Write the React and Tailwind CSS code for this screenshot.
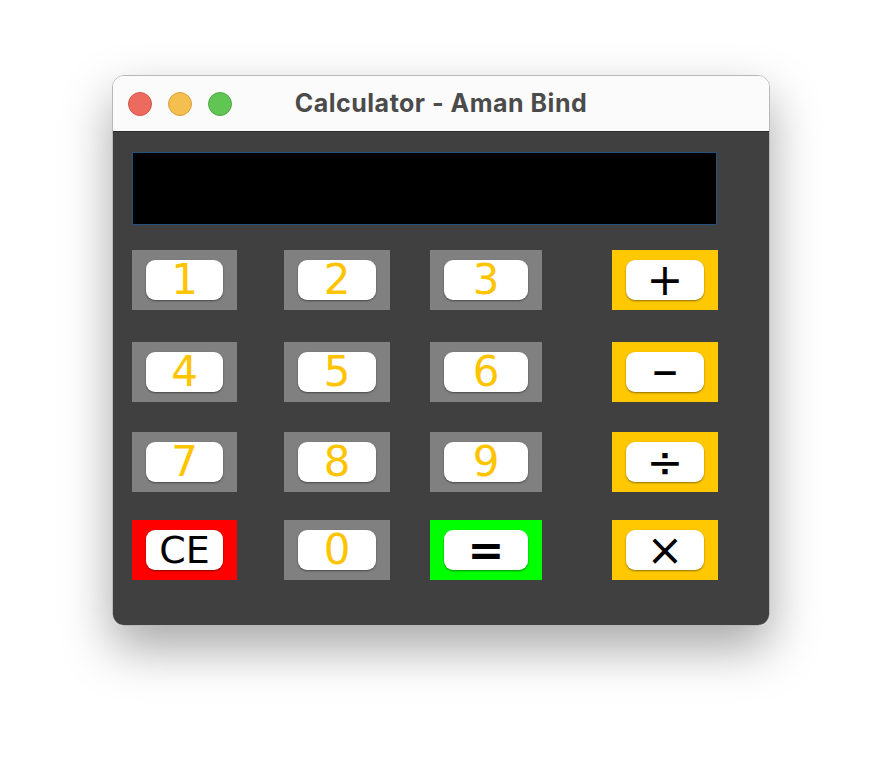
import React from "react";

const rows = [
  [
    { label: "1", kind: "num" },
    { label: "2", kind: "num" },
    { label: "3", kind: "num" },
    { label: "+", kind: "op" },
  ],
  [
    { label: "4", kind: "num" },
    { label: "5", kind: "num" },
    { label: "6", kind: "num" },
    { label: "−", kind: "minus" },
  ],
  [
    { label: "7", kind: "num" },
    { label: "8", kind: "num" },
    { label: "9", kind: "num" },
    { label: "÷", kind: "op" },
  ],
  [
    { label: "CE", kind: "clear" },
    { label: "0", kind: "num" },
    { label: "=", kind: "equals" },
    { label: "×", kind: "op" },
  ],
];

const colClass = [
  "w-[105px]",
  "w-[106px] ml-[47px]",
  "w-[112px] ml-[40px]",
  "w-[106px] ml-[70px]",
];

const rowGap = ["", "mt-[32px]", "mt-[30px]", "mt-[28px]"];

const outerBg = {
  num: "bg-[#808080]",
  op: "bg-[#ffc800]",
  minus: "bg-[#ffc800]",
  clear: "bg-[#ff0000]",
  equals: "bg-[#00ff00]",
};

const labelClass = {
  num: "text-[#ffc400] text-[42px]",
  op: "text-black text-[44px]",
  minus: "text-black text-[34px] font-bold",
  clear: "text-black text-[38px]",
  equals: "text-black text-[44px] font-bold",
};

const CalcButton = ({ item, col }) => (
  <div
    className={`${colClass[col]} ${outerBg[item.kind]} h-[60px] flex items-center justify-center`}
  >
    <div className="w-[calc(100%-28px)] h-[40px] bg-white rounded-[9px] shadow-[0_1px_2px_rgba(0,0,0,0.45)] flex items-center justify-center overflow-visible">
      <span
        className={`${labelClass[item.kind]} leading-none font-['DejaVu_Sans',sans-serif]`}
      >
        {item.label}
      </span>
    </div>
  </div>
);

export default function App() {
  return (
    <div className="min-h-screen bg-white flex justify-center pt-[75px]">
      <div className="w-[658px] h-[551px] rounded-[12px] overflow-hidden border border-[#b8b8b8] shadow-[0_22px_50px_rgba(0,0,0,0.35)] flex flex-col">
        <div className="relative h-[56px] bg-[#fbfbfb] border-b border-[#2b2b2b] flex items-center px-[15px] gap-[16px] shrink-0">
          <div className="w-[24px] h-[24px] rounded-full bg-[#ec6a5e] border border-[#d5574b]" />
          <div className="w-[24px] h-[24px] rounded-full bg-[#f5bf4f] border border-[#d9a23d]" />
          <div className="w-[24px] h-[24px] rounded-full bg-[#61c554] border border-[#4ea942]" />
          <div className="absolute inset-0 flex items-center justify-center pointer-events-none">
            <span className="text-[25px] tracking-[0.5px] font-bold text-[#4b4b4b] font-['Inter',sans-serif]">
              Calculator - Aman Bind
            </span>
          </div>
        </div>

        <div className="flex-1 bg-[#404040] pl-[19px] pt-[20px]">
          <div className="w-[585px] h-[73px] bg-black border border-[#24507f]" />

          <div className="mt-[25px]">
            {rows.map((row, r) => (
              <div key={r} className={`flex ${rowGap[r]}`}>
                {row.map((item, c) => (
                  <CalcButton key={item.label} item={item} col={c} />
                ))}
              </div>
            ))}
          </div>
        </div>
      </div>
    </div>
  );
}
